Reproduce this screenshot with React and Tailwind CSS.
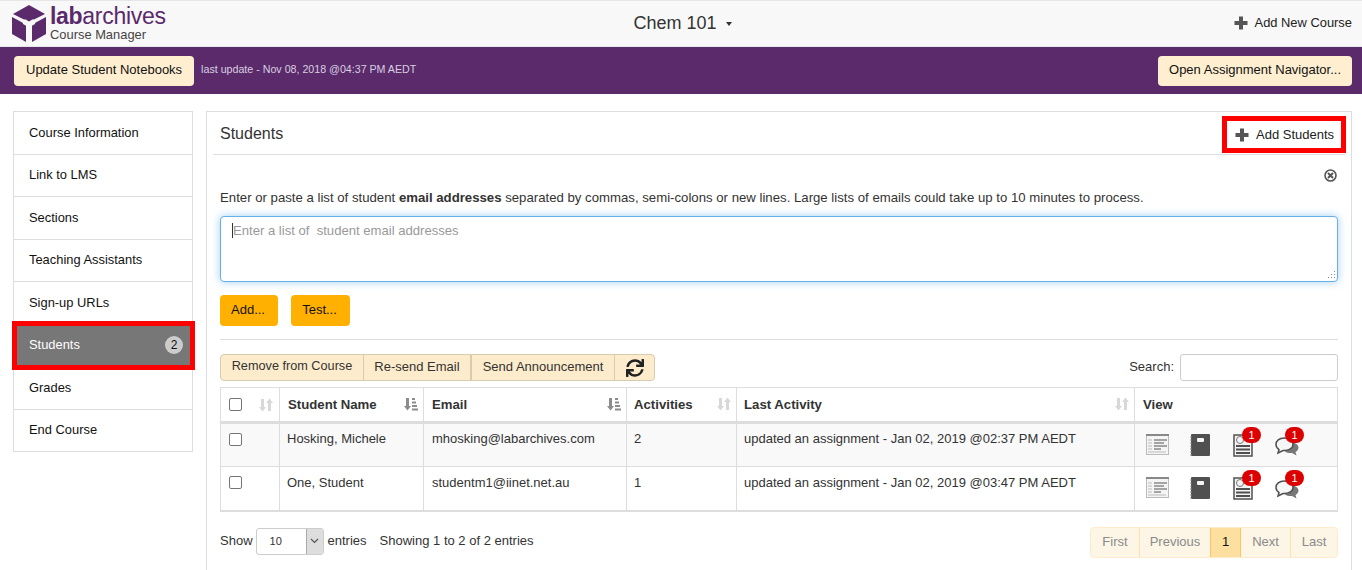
import { FaSync } from "react-icons/fa";

const navItems = [
  "Course Information",
  "Link to LMS",
  "Sections",
  "Teaching Assistants",
  "Sign-up URLs",
  "Students",
  "Grades",
  "End Course",
];

const students = [
  {
    name: "Hosking, Michele",
    email: "mhosking@labarchives.com",
    activities: "2",
    last: "updated an assignment - Jan 02, 2019 @02:37 PM AEDT",
    shade: true,
  },
  {
    name: "One, Student",
    email: "studentm1@iinet.net.au",
    activities: "1",
    last: "updated an assignment - Jan 02, 2019 @03:47 PM AEDT",
    shade: false,
  },
];

const Logo = () => (
  <svg width="34" height="38" viewBox="0 0 34 38" className="shrink-0">
    <path d="M17 0 L33 9 L17 17 L1 9 Z" fill="#5a2a6b" />
    <path d="M0 12 L14 19.5 L14 37 L0 29 Z" fill="#5a2a6b" />
    <path d="M34 12 L20 19.5 L20 37 L34 29 Z" fill="#5a2a6b" />
    <path d="M11 19 L17 22.5 L23 19 L23.500 15.500 L17 12.500 L10.500 15.500 Z" fill="#f8f8f8" />
    <path d="M15 21 H19 V33 H15 Z" fill="#f8f8f8" />
    <path d="M12 13.500 L17 11 L22 13.500 L17 16.500 Z" fill="#5a2a6b" />
  </svg>
);

const Plus = () => (
  <svg width="14" height="14" viewBox="0 0 14 14" className="shrink-0">
    <path d="M5 0.500 H9 V5 H13.500 V9 H9 V13.500 H5 V9 H0.500 V5 H5 Z" fill="#555" />
  </svg>
);

const SortIcon = ({ active }) =>
  active ? (
    <svg width="14" height="14" viewBox="0 0 14 14">
      <path d="M2 1 H5 V9 H7 L3.500 13.500 L0 9 H2 Z" fill="#8c8c8c" />
      <path d="M8 1 H11 V3 H8 Z M8 4.500 H12 V6.500 H8 Z M8 8 H13 V10 H8 Z M8 11.500 H14 V13.500 H8 Z" fill="#8c8c8c" />
    </svg>
  ) : (
    <svg width="14" height="14" viewBox="0 0 14 14">
      <path d="M2 1 H5 V9 H7 L3.500 13.500 L0 9 H2 Z" fill="#d8d8d8" />
      <path d="M9 13 H12 V5 H14 L10.500 0.500 L7 5 H9 Z" fill="#d8d8d8" />
    </svg>
  );

const ListIcon = () => (
  <svg width="23" height="21" viewBox="0 0 23 21">
    <rect x="0.500" y="0.500" width="22" height="20" fill="#f4f4f4" stroke="#bbb" />
    <rect x="0" y="0" width="23" height="2" fill="#888" />
    <path d="M8 6 H21 M8 9 H18 M8 12 H21 M8 15 H15" stroke="#555" strokeWidth="1.200" />
    <path d="M2 6 H6 M2 9 H6 M2 12 H6 M2 15 H6 M2 18 H20" stroke="#bbb" />
  </svg>
);

const NotebookIcon = () => (
  <svg width="20" height="23" viewBox="0 0 20 23">
    <rect x="1" y="0" width="19" height="22" rx="1" fill="#505050" />
    <rect x="7" y="4" width="7" height="4" rx="1" fill="#f4f4f4" />
    <path d="M0 3 H2 M0 6 H2 M0 9 H2 M0 12 H2 M0 15 H2 M0 18 H2 M0 21 H2" stroke="#888" />
  </svg>
);

const GradeIcon = () => (
  <svg width="20" height="23" viewBox="0 0 20 23">
    <rect x="1" y="1" width="18" height="21" fill="#f4f4f4" stroke="#505050" strokeWidth="1.500" />
    <circle cx="7" cy="6" r="3.500" fill="none" stroke="#777" />
    <path d="M3 11 H17 V13 H3 Z M3 14.500 H17 V16.500 H3 Z M3 18 H17 V20 H3 Z" fill="#505050" />
  </svg>
);

const ChatIcon = () => (
  <svg width="24" height="19" viewBox="0 0 24 19">
    <path d="M14 5 C20 5 23.500 7.500 23.500 10.500 C23.500 12.500 22 14 20.500 15 L21.500 18.500 L17 16 C12 16.500 8 14 8 10.500 C8 7.500 10 5 14 5 Z" fill="#777" />
    <path d="M9.500 1 C4 1 1 4 1 7.500 C1 10 2.500 11.500 4 12.500 L3 16 L8 13.500 C13 14 18 11.500 18 7.500 C18 4 15 1 9.500 1 Z" fill="#f6f6f6" stroke="#505050" strokeWidth="1.500" />
  </svg>
);

const ViewIcons = () => (
  <div className="flex items-start">
    <span className="ml-[3px] w-[44px]">
      <ListIcon />
    </span>
    <span className="w-[43px]">
      <NotebookIcon />
    </span>
    <span className="relative w-[42px]">
      <GradeIcon />
      <span className="absolute -top-[7px] left-[9px] flex h-4 w-[19px] items-center justify-center rounded-full bg-[#dd0000] text-[11px] leading-none text-white">
        1
      </span>
    </span>
    <span className="relative mt-[3px] w-[24px]">
      <ChatIcon />
      <span className="absolute -top-[10px] left-[10px] flex h-4 w-[19px] items-center justify-center rounded-full bg-[#dd0000] text-[11px] leading-none text-white">
        1
      </span>
    </span>
  </div>
);

const Checkbox = () => (
  <span className="block h-[13px] w-[13px] rounded-[2px] border border-[#767676] bg-white"></span>
);

const HeadCell = ({ label, width, active, pad }) => (
  <th className={`${width} ${pad} border-l border-[#ddd] pr-[5px] text-left align-middle font-bold`}>
    <div className="flex items-center justify-between text-[13.200px] text-[#333]">
      <span>{label}</span>
      <SortIcon active={active} />
    </div>
  </th>
);

export default function App() {
  return (
    <div className="h-[570px] w-[1362px] overflow-hidden bg-white font-['Liberation_Sans',Arial,sans-serif] text-[13px] text-[#111]">
      {/* top bar */}
      <div className="flex h-[47px] items-center justify-between border-y border-[#e7e7e7] bg-[#f8f8f8] pl-3 pr-[10px]">
        <div className="flex w-[400px] items-center gap-[4px]">
          <Logo />
          <div className="flex flex-col pb-[1px]">
            <span className="text-[23px] leading-[24px] tracking-[-0.3px] text-[#5a2a6b]">
              <b>lab</b>archives
            </span>
            <span className="text-[12.900px] leading-[14px] text-[#444]">Course Manager</span>
          </div>
        </div>
        <div className="ml-[1px] flex items-center gap-[9px] text-[18px] text-[#333]">
          Chem 101
          <span className="mt-[1px] h-0 w-0 border-x-[3.5px] border-t-[4px] border-x-transparent border-t-[#333]"></span>
        </div>
        <div className="flex w-[400px] items-center justify-end gap-[7px] pb-[1px] text-[12.900px] text-[#222]">
          <Plus />
          Add New Course
        </div>
      </div>

      {/* purple bar */}
      <div className="flex h-[47px] items-center justify-between bg-[#5a2a6b] px-[10px] pl-[14px]">
        <div className="flex items-center gap-[7px]">
          <button className="h-[30px] rounded-[4px] bg-[#ffefd0] px-3 pb-[1px] text-[13px] text-[#111]">
            Update Student Notebooks
          </button>
          <span className="pb-[1px] text-[10.660px] text-[#d9cfe0]">last update - Nov 08, 2018 @04:37 PM AEDT</span>
        </div>
        <button className="h-[30px] rounded-[4px] bg-[#ffefd0] px-[11px] pb-[1px] text-[13px] text-[#111]">
          Open Assignment Navigator...
        </button>
      </div>

      <div className="mt-[17px] flex items-start pl-[13px] pr-[10px]">
        {/* sidebar */}
        <div className="w-[180px] shrink-0 border border-b-0 border-[#ddd]">
          {navItems.map((item) => {
            const on = item === "Students";
            return (
              <div
                key={item}
                className={`relative flex h-[42.500px] items-center justify-between border-b border-[#ddd] pb-[1px] pl-[15px] pr-[9px] text-[12.900px] ${
                  on ? "bg-[#777] text-white" : "text-[#111]"
                }`}
              >
                {item}
                {on && (
                  <>
                    <span className="flex h-[18px] w-[18px] items-center justify-center rounded-full bg-[#ccc] text-[12px] text-[#111]">
                      2
                    </span>
                    <span className="absolute -bottom-[4px] -left-[2px] -right-[3px] -top-[4px] border-[5px] border-[#ff0000]"></span>
                  </>
                )}
              </div>
            );
          })}
        </div>

        {/* main panel */}
        <div className="ml-[13px] h-[480px] flex-1 border border-[#ddd] px-[6px]">
          <div className="flex h-[43px] items-center justify-between border-b border-[#ddd] pl-[7px]">
            <span className="pt-[1px] text-[16px] text-[#333]">Students</span>
            <div className="relative top-[1px] -mr-[1px] flex h-[37px] w-[124px] items-center gap-[7px] border-[5px] border-[#ff0000] pl-[8px] pt-[1px] text-[#222]">
              <Plus />
              Add Students
            </div>
          </div>

          <div className="px-[7px]">
            <div className="flex justify-end pr-[1px] pt-[14px]">
              <svg width="13" height="13" viewBox="0 0 13 13">
                <circle cx="6.500" cy="6.500" r="5.500" fill="none" stroke="#555" strokeWidth="1.600" />
                <path d="M4 4 L9 9 M9 4 L4 9" stroke="#555" strokeWidth="2" />
              </svg>
            </div>
            <p className="mt-[7px] text-[13.200px] leading-[18px] text-[#333]">
              Enter or paste a list of student <b>email addresses</b> separated by commas, semi-colons or new lines. Large lists of emails could take up to 10 minutes to process.
            </p>
            <div className="relative mt-[9px] h-[66px] rounded-[4px] border border-[#66afe9] bg-white py-[4px] pl-[11px] text-[13.100px] text-[#999] shadow-[0_0_8px_rgba(102,175,233,0.6)]">
              <span className="border-l border-[#333]">Enter a list of &nbsp;student email addresses</span>
              <svg width="10" height="10" viewBox="0 0 10 10" className="absolute bottom-[1px] right-[1px]">
                <path d="M8 1 H9 V2 H8 Z M5 4 H6 V5 H5 Z M8 4 H9 V5 H8 Z M2 7 H3 V8 H2 Z M5 7 H6 V8 H5 Z M8 7 H9 V8 H8 Z" fill="#888" />
              </svg>
            </div>
            <div className="mt-[13px] flex gap-[13px]">
              <button className="h-[31px] w-[58px] rounded-[4px] bg-[#ffb000] pb-[2px] pr-[2px] text-[13px] text-[#111]">Add...</button>
              <button className="h-[31px] w-[59px] rounded-[4px] bg-[#ffb000] pb-[2px] pr-[2px] text-[13px] text-[#111]">Test...</button>
            </div>
            <div className="mt-[13px] border-t border-[#ddd]"></div>

            <div className="mt-[14px] flex items-center justify-between">
              <div className="flex h-[27px] overflow-hidden rounded-[4px] border border-[#d8ccb0] bg-[#fdeccb] text-[#333]">
                <span className="flex w-[142px] items-center justify-center pb-[1px] text-[12.700px]">Remove from Course</span>
                <span className="flex w-[107px] items-center justify-center border-l border-[#d8ccb0] pb-[1px]">Re-send Email</span>
                <span className="flex w-[144px] items-center justify-center border-l-2 border-[#d8ccb0] pb-[1px]">Send Announcement</span>
                <span className="flex w-[40px] items-center justify-center border-l border-[#d8ccb0]">
                  <FaSync className="h-[18px] w-[18px] text-[#222]" />
                </span>
              </div>
              <div className="flex items-center gap-[6px] text-[#333]">
                <span className="pb-[2px]">Search:</span>
                <span className="h-[27px] w-[158px] rounded-[3px] border border-[#ccc]"></span>
              </div>
            </div>

            <table className="mt-[6px] w-full table-fixed border-collapse border-b-2 border-[#ddd] text-[#333]">
              <thead>
                <tr className="h-[35px] border-y border-b-[3px] border-[#ddd]">
                  <th className="w-[59px] border-l border-[#ddd] pl-[8px] pr-[6px] align-middle">
                    <div className="flex items-center justify-between">
                      <Checkbox />
                      <SortIcon />
                    </div>
                  </th>
                  <HeadCell label="Student Name" width="w-[144px]" pad="pl-2" active />
                  <HeadCell label="Email" width="w-[203px]" pad="pl-2" active />
                  <HeadCell label="Activities" width="w-[110px]" pad="pl-[7px]" />
                  <HeadCell label="Last Activity" width="w-[398px]" pad="pl-[7px]" />
                  <th className="border-x border-[#ddd] px-2 text-left align-middle text-[13.200px] font-bold">View</th>
                </tr>
              </thead>
              <tbody>
                {students.map((s) => (
                  <tr key={s.name} className={`h-[44px] border-b border-[#ddd] ${s.shade ? "bg-[#f9f9f9]" : "bg-white"}`}>
                    <td className="border-l border-[#ddd] pb-[11px] pl-[8px] align-middle">
                      <Checkbox />
                    </td>
                    <td className="border-l border-[#ddd] pb-[12px] pl-[7px] pr-2 align-middle">{s.name}</td>
                    <td className="border-l border-[#ddd] px-2 pb-[12px] align-middle">{s.email}</td>
                    <td className="border-l border-[#ddd] pb-[12px] pl-[7px] pr-2 align-middle">{s.activities}</td>
                    <td className="border-l border-[#ddd] pb-[12px] pl-[7px] pr-2 align-middle">{s.last}</td>
                    <td className="border-x border-[#ddd] px-2 pt-[1px] align-middle">
                      <ViewIcons />
                    </td>
                  </tr>
                ))}
              </tbody>
            </table>

            <div className="mt-[15px] flex items-center justify-between text-[#333]">
              <div className="flex items-center pb-[2px]">
                Show
                <span className="ml-[3px] flex h-[27px] w-[68px] overflow-hidden rounded-[3px] border border-[#ccc] text-[11px]">
                  <span className="flex flex-1 items-center pl-[13px] pt-[1px]">10</span>
                  <span className="flex w-[17px] items-center justify-center border-l border-[#aaa] bg-[#ddd]">
                    <svg width="9" height="6" viewBox="0 0 9 6">
                      <path d="M1 1 L4.500 4.500 L8 1" fill="none" stroke="#555" strokeWidth="1.200" />
                    </svg>
                  </span>
                </span>
                <span className="ml-[4px]">entries</span>
                <span className="ml-[13px]">Showing 1 to 2 of 2 entries</span>
              </div>
              <div className="flex h-[31px] overflow-hidden rounded-[4px] border border-[#fdeccb] bg-[#fdf6e6] text-[#8a8a8a]">
                <span className="flex w-[48px] items-center justify-center">First</span>
                <span className="flex w-[71px] items-center justify-center border-l border-[#fde3ab]">Previous</span>
                <span className="flex w-[31px] items-center justify-center border border-y-0 border-[#fcc660] bg-[#fde0a0] text-[#111]">1</span>
                <span className="flex w-[49px] items-center justify-center">Next</span>
                <span className="flex w-[47px] items-center justify-center border-l border-[#fde3ab]">Last</span>
              </div>
            </div>
          </div>
        </div>
      </div>
    </div>
  );
}
